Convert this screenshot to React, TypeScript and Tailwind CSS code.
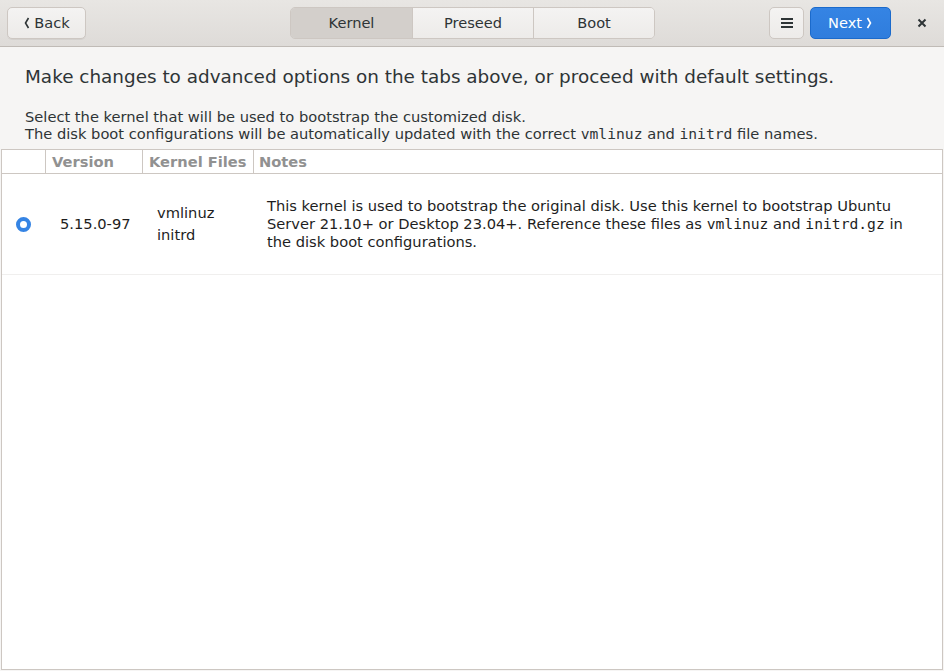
import { useState } from 'react';

type Kernel = {
  id: string;
  version: string;
  files: string[];
};

const kernels: Kernel[] = [{ id: 'k1', version: '5.15.0-97', files: ['vmlinuz', 'initrd'] }];

const tabs = ['Kernel', 'Preseed', 'Boot'];

const mono = { fontFamily: '"DejaVu Sans Mono", monospace' };

function App() {
  const [tab, setTab] = useState('Kernel');
  const [selected, setSelected] = useState('k1');

  return (
    <div
      className="flex h-[671px] w-[944px] flex-col overflow-hidden bg-[#f6f5f4] text-[#2e3436]"
      style={{ fontFamily: '"DejaVu Sans", "Liberation Sans", sans-serif' }}
    >
      {/* Header bar */}
      <div className="flex h-[47px] shrink-0 items-center border-b border-[#c0bbb6] bg-gradient-to-b from-[#e8e6e3] to-[#dedbd8] px-[7px]">
        <button className="flex h-[32px] w-[79px] items-center justify-center rounded-[5px] border border-[#cdc7c2] bg-gradient-to-b from-[#f4f3f2] to-[#edebe9] text-[14.6px] text-[#2e3436] shadow-[0_1px_0_rgba(0,0,0,0.05)]">
          <svg width="8" height="14" viewBox="0 0 8 14" className="mr-[3px]">
            <path d="M5.5 2 L2.5 7 L5.5 12" fill="none" stroke="#2e3436" strokeWidth="1.6" />
          </svg>
          Back
        </button>

        <div className="ml-[204px] flex h-[32px] overflow-hidden rounded-[5px] border border-[#cdc7c2]">
          {tabs.map((t, i) => (
            <button
              key={t}
              onClick={() => setTab(t)}
              className={`flex w-[121px] items-center justify-center text-[14.6px] text-[#2e3436] ${
                i > 0 ? 'border-l border-[#cdc7c2]' : ''
              } ${tab === t ? 'bg-[#d3cfcb]' : 'bg-gradient-to-b from-[#f4f3f2] to-[#edebe9]'}`}
            >
              {t}
            </button>
          ))}
        </div>

        <button className="ml-[114px] flex h-[32px] w-[35px] items-center justify-center rounded-[5px] border border-[#cdc7c2] bg-gradient-to-b from-[#f4f3f2] to-[#edebe9]">
          <svg width="14" height="12" viewBox="0 0 14 12">
            <path d="M1 2 H13 M1 6 H13 M1 10 H13" stroke="#2e3436" strokeWidth="1.8" />
          </svg>
        </button>

        <button className="ml-[6px] flex h-[32px] w-[81px] items-center justify-center rounded-[5px] border border-[#1b6acb] bg-gradient-to-b from-[#3584e4] to-[#2f7ddd] text-[14.6px] text-white">
          Next
          <svg width="8" height="14" viewBox="0 0 8 14" className="ml-[3px]">
            <path d="M2.5 2 L5.5 7 L2.5 12" fill="none" stroke="#ffffff" strokeWidth="1.6" />
          </svg>
        </button>

        <button className="ml-[21px] flex h-[32px] w-[20px] items-center justify-center">
          <svg width="10" height="10" viewBox="0 0 10 10">
            <path d="M1.5 1.5 L8.5 8.5 M8.5 1.5 L1.5 8.5" stroke="#2e3436" strokeWidth="2" />
          </svg>
        </button>
      </div>

      {/* Intro */}
      <div className="px-[25px] pt-[18px]">
        <p className="text-[18.4px] leading-[23px] text-[#2e3436]">
          Make changes to advanced options on the tabs above, or proceed with default settings.
        </p>
        <p className="mt-[20px] text-[14.67px] leading-[17px] text-[#2e3436]">
          Select the kernel that will be used to bootstrap the customized disk.
          <br />
          The disk boot configurations will be automatically updated with the correct{' '}
          <span style={mono}>vmlinuz</span> and <span style={mono}>initrd</span> file names.
        </p>
      </div>

      {/* Table */}
      <div className="mx-[1px] mb-[1px] mt-[7px] flex flex-1 flex-col border border-[#cdc7c2] bg-white">
        <div className="flex h-[24px] shrink-0 border-b border-[#cdc7c2] text-[14.67px] font-bold text-[#919191]">
          <div className="w-[44px] border-r border-[#cdc7c2]" />
          <div className="flex w-[97px] items-center border-r border-[#cdc7c2] pl-[6px]">Version</div>
          <div className="flex w-[111px] items-center border-r border-[#cdc7c2] pl-[6px]">Kernel Files</div>
          <div className="flex flex-1 items-center pl-[5px]">Notes</div>
        </div>

        {kernels.map((k) => (
          <div
            key={k.id}
            onClick={() => setSelected(k.id)}
            className="flex h-[101px] border-b border-[#f0efee] text-[14.67px] text-[#1e1e1e]"
          >
            <div className="flex w-[44px] items-center pl-[14px]">
              <span
                className={`h-[15px] w-[15px] rounded-full ${
                  selected === k.id ? 'border-[4px] border-[#3584e4] bg-white' : 'border border-[#cdc7c2]'
                }`}
              />
            </div>
            <div className="flex w-[97px] items-center pl-[14px]">{k.version}</div>
            <div className="flex w-[111px] flex-col justify-center pl-[14px] leading-[22px]">
              {k.files.map((f) => (
                <span key={f}>{f}</span>
              ))}
            </div>
            <div className="flex flex-1 items-center pl-[13px] pr-[20px] leading-[18px]">
              <p>
                This kernel is used to bootstrap the original disk. Use this kernel to bootstrap Ubuntu Server
                21.10+ or Desktop 23.04+. Reference these files as <span style={mono}>vmlinuz</span> and{' '}
                <span style={mono}>initrd.gz</span> in the disk boot configurations.
              </p>
            </div>
          </div>
        ))}
      </div>
    </div>
  );
}

export default App;
